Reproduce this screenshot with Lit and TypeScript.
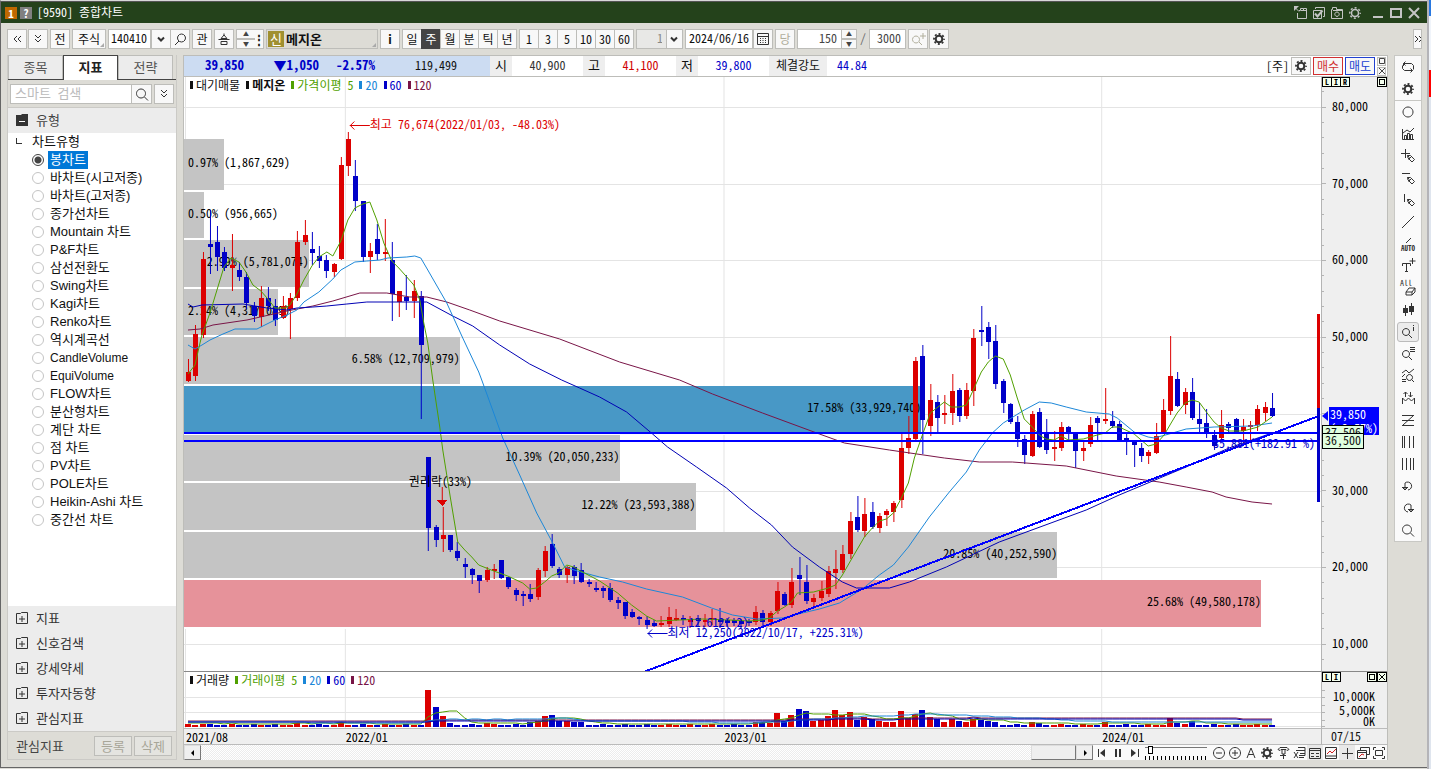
import { LitElement, html, svg, css } from "lit";
import { customElement, property, state } from "lit/decorators.js";
import { classMap } from "lit/directives/class-map.js";

const S = (d: string) => svg`<path d=${d} fill="none" stroke="currentColor"></path>`;
const F = (d: string) => svg`<path d=${d} fill="currentColor"></path>`;
const PEN = "M7.500 7.500h3l4 4-2.500 2.500-4-4zM8.500 11.500l2.500-2.500M7.500 7.500l2 2";
const MAG = "M6 4.500a3.500 3.500 0 1 0 .01 0zM8.500 10.500l3.500 3.500";

const ICONS: Record<string, any> = {
  left2: S("M8 5L5 8l3 3M12 5L9 8l3 3"),
  right2: S("M1 5l3 3-3 3M5 5l3 3-3 3"),
  down2: S("M5 4l3 3 3-3M5 8l3 3 3-3"),
  chevron: svg`<path d="M5 6.500l3 3 3-3" fill="none" stroke="currentColor" stroke-width="2"></path>`,
  lens: S("M9.500 3a4 4 0 1 1-.01 0zM7 10l-4 4"),
  search: S("M7 3a4.500 4.500 0 1 0 .01 0zM10.500 11l3.500 3.500"),
  lensPlus: S("M6 5a3.500 3.500 0 1 0 .01 0zM9 11l3 3M13 2v6M10 5h6"),
  calendar: svg`${S("M2.500 2.500h11v11h-11zM2.500 5.500h11")}${F("M5 7h1v1H5zM7.500 7h1v1h-1zM10 7h1v1h-1zM5 9h1v1H5zM7.500 9h1v1h-1zM10 9h1v1h-1zM5 11h1v1H5zM7.500 11h1v1h-1zM10 11h1v1h-1z")}`,
  gear: svg`<circle cx="8" cy="8" r="3.300" fill="none" stroke="currentColor" stroke-width="2"></circle><circle cx="8" cy="8" r="5" fill="none" stroke="currentColor" stroke-width="1.800" stroke-dasharray="1.960 1.960" stroke-dashoffset="1"></circle>`,
  sun: svg`<circle cx="8" cy="8" r="3.500" fill="none" stroke="currentColor" stroke-width="1.500"></circle><circle cx="8" cy="8" r="5.200" fill="none" stroke="currentColor" stroke-width="1.500" stroke-dasharray="2 2.080" stroke-dashoffset="1"></circle>`,
  export: svg`${S("M4.500 8v5.500h9v-10h-3M8 5.500h5.500M6 5.500h1.500v-2h3v2M2 2.500l4 4")}${F("M1 1h5L1 6z")}`,
  copy: svg`${S("M4.500 4V2.500h9v9H12M2.500 5.500h8v8h-8z")}<path d="M4 8.500l2.500 3 5-6" fill="none" stroke="currentColor" stroke-width="2"></path>`,
  camera: S("M2.500 4.500h1v-2h4v2h6v9h-11zM4 5.500h9M8 7a2.200 2.200 0 1 0 .01 0z"),
  stairs: S("M8 2.500v2M8 4l-3 3.500h6L8 4M2.500 8.500h11M5 10.500h6v3H5z"),
  loop: S("M3.500 7V4.500h8l2 2v4M5.500 2.500l-2 2 2 2M2.500 6.500v3l2 2h8M10.500 9.500l2 2-2 2"),
  circle: S("M8 3a5 5 0 1 0 .01 0z"),
  indicator: S("M2.500 3v10.500H14M4.500 13V9.500h2V13M7.500 13V7.500h2V13M10.500 13V8.500h2V13M3 7l4-3 3 2 4-4"),
  crossPen: S("M5.500 1v9M1 5.500h9" + PEN),
  linePen: S("M2 3.500h8" + PEN),
  vlinePen: S("M4.500 2v8" + PEN),
  trend: S("M2 14L14 2"),
  auto: svg`${S("M6 7l5-5")}<text x="8" y="15" font-size="7" font-weight="700" text-anchor="middle" fill="currentColor">AUTO</text>`,
  textPlus: svg`${S("M12.500 0v6M9.500 3h6")}${S("M2.500 8V5.500h8V8M6.500 5.500v8M5 13.500h3")}`,
  eraseAll: svg`<text x="6" y="6" font-size="8" text-anchor="middle" fill="currentColor">All</text>${S("M6 12l3-4h6l-3 4zM6 12v3h6v-3M12 15l3-3V8")}`,
  candles: svg`${S("M5.500 3v11M11.500 1v12")}${F("M3 6h5v5H3zM9 4h5v6H9z")}`,
  magInfo: svg`${S(MAG)}${S("M13.500 1v1M13.500 3v4")}`,
  magLines: svg`${S(MAG)}${S("M10 1.500h5M10 3.500h5M10 5.500h5")}`,
  magTrend: S("M2 5l4-3 3 3 5-4M2 9l3-3M2 11.500h4M2 13.500h4M9.500 6.500a3 3 0 1 0 .01 0zM12 12l2 2"),
  swing: svg`${S("M2.500 14V8l3 3 3-3 3 3 3-3v6M5.500 7V2M10.500 2v5M3.500 4l2-2 2 2M8.500 5l2 2 2-2")}`,
  zig: S("M2 3.500h12M2 8.500h12M2 13.500h12M13 4L3 13"),
  bars3: svg`${S("M2.500 2v12M4.500 2v12M9.500 2v12M13.500 2v12")}`,
  bars4: S("M2.500 2v12M6.500 2v12M10.500 2v12M13.500 2v12"),
  undo: S("M5 5a4 4 0 1 1 3 7M2 9.500h6M2.500 9.500l2.500 2.500 2.500-2.500M5 5v7"),
  redo: S("M11 5a4 4 0 1 0-3 7M8 9.500h6M8.500 9.500l2.500 2.500 2.500-2.500M11 5v7"),
  first: svg`${S("M3.500 4v8")}${F("M10 4v8L5 8z")}`,
  pause: F("M5 4h2v8H5zM9 4h2v8H9z"),
  last: svg`${S("M12.500 4v8")}${F("M5 4v8l5-4z")}`,
  minus: S("M8 2.500a5.500 5.500 0 1 0 .01 0zM5 8h6"),
  plus: S("M8 2.500a5.500 5.500 0 1 0 .01 0zM5 8h6M8 5v6"),
  letter: S("M4 13L8 3l4 10M5.500 9.500h5"),
  filter: S("M3 4.500l2-2h7l2 2-2 1-1-1H6l-1 1zM7 5v4h3V5M5 10.500h6M8.500 9v5"),
  excel: S("M5 5.500h9M7 2.500h7v8H8M9 8.500h5M3 7l4 6M7 7l-4 6M8 12.500h5"),
  panel: S("M2.500 3.500h11v10h-11zM2.500 5.500h11M4 8.500h3M9 8.500h3M4 11.500h3M9 11.500h3"),
  chartbox: svg`${S("M2.500 2.500h11v11h-11zM2.500 11h11")}<path d="M4 9l3-3 2 2 4-4" stroke="#d02020" fill="none"></path>`,
  cross: S("M8.500 3v11M3 8.500h11"),
  windows: svg`${S("M5.500 5V2.500h9v7H12M2.500 5.500h9v8h-9zM2.500 7.500h9")}<path d="M4 12l3-3 2 1" stroke="#d02020" fill="none"></path>`,
  full: S("M2.500 5V2.500H5M11 2.500h2.500V5M13.500 11v2.500H11M5 13.500H2.500V11M4.500 5.500h7v5h-7z"),
  folderPlus: S("M2.500 3.500h4l1-1h6v11h-11zM8 6v6M5 9h6"),
  folderMinus: svg`${F("M2 3h5l1-1h6v12H2z")}<path d="M5 9.500h6" stroke="#fff"></path>`,
};
const icon = (n: string) => html`<svg class="ic" width="16" height="16" viewBox="0 0 16 16" aria-hidden="true">${ICONS[n]}</svg>`;
const square = html`<svg width="8" height="8" viewBox="0 0 8 8" aria-hidden="true"><path d="M1.500 1.500h5v5h-5z" fill="none" stroke="currentColor"></path></svg>`;
const saltire = html`<svg width="8" height="8" viewBox="0 0 8 8" aria-hidden="true"><path d="M1 1l6 6M7 1L1 7" fill="none" stroke="currentColor"></path></svg>`;

const FIRST_X = 188;
const STEP = 7.282;
const cx = (i: number) => Math.round(FIRST_X + STEP * i);

// high, body top, body bottom, low; u = rise, d = fall
const CANDLES = `359,372,381,381u 325,334,376,380u 252,259,335,337u 210,244,247,273d 226,242,257,270d 247,252,268,270d 234,265,268,290u 262,270,277,280d 272,277,303,308d 302,306,316,321d
286,298,317,326u 287,298,306,310d 299,306,320,325d 296,306,318,318u 293,298,309,338u 231,242,298,300u 220,235,242,244u 232,249,253,264d 246,256,261,267d 255,260,271,277d
263,264,272,276u 157,165,259,259u 132,139,166,175u 160,176,201,210d 201,201,257,261d 243,251,257,272u 224,239,254,259d 219,252,254,260u 242,260,294,320d 291,291,302,316u
275,297,301,309d 280,291,301,317u 291,296,345,418d 457,457,528,550d 525,527,540,546d 507,535,539,551u 535,535,550,551d 542,551,558,560d 558,564,567,577d 568,569,575,583d
575,575,581,592d 567,570,580,581u 564,569,571,578u 560,560,578,578d 577,577,587,588d 588,590,595,600d 591,594,595,605d 584,594,599,601d 568,570,597,599u 546,551,571,576u
534,544,566,567d 567,569,575,577d 566,567,575,582u 565,567,576,583d 563,570,582,582d 579,582,584,586d 582,588,589,591d 586,588,591,597d 583,588,600,601d 597,600,603,608d
602,602,616,618d 609,612,617,617d 616,617,619,624d 616,620,625,628d 620,623,626,626d 616,623,625,626u 607,617,624,626u 609,618,619,620u 615,618,620,624d 616,619,622,627u
615,618,621,626d 614,620,621,626u 609,618,620,624u 608,619,622,627d 618,620,623,626d 618,620,623,625d 619,621,624,627d 619,621,623,625d 606,612,622,624u 610,613,622,627d
611,613,622,625u 582,591,611,613u 592,594,605,605d 568,582,605,607u 557,575,579,594d 565,582,601,603d 594,598,602,607u 581,591,598,600u 566,571,594,596u 550,569,573,588u
545,554,570,572u 512,521,554,558u 496,517,530,531d 498,514,531,536u 502,512,527,528d 513,516,528,532u 509,511,515,525u 501,503,512,521u 434,448,500,507u 416,438,448,453u
357,361,439,440u 345,356,420,453d 384,400,426,435u 395,402,418,433d 395,413,415,423u 374,391,413,424u 388,390,416,421d 383,390,416,418u 329,338,391,405u 306,330,332,345d
322,327,342,358d 325,341,384,388d 379,381,403,412d 403,404,422,423d 416,422,439,446d 435,439,455,463d 411,414,456,456u 408,412,447,447d 419,433,450,453d 431,447,449,460u
422,427,448,450u 426,427,434,441d 434,434,451,467d 440,448,451,460u 417,425,444,446u 416,418,423,439d 388,419,421,423u 411,421,426,427d 421,424,441,441d 433,438,441,454d
441,442,445,466d 443,448,456,461d 450,452,456,463u 423,436,453,453u 399,410,433,433u 336,376,411,414u 372,379,406,406d 388,392,405,413u 378,392,418,419d 403,419,424,433d
409,423,433,437d 430,435,446,449d 410,425,438,440u 422,424,428,432d 418,419,432,432d 419,427,431,442u 421,425,427,440u 405,409,425,430u 402,407,413,420u 393,408,416,416d`
  .split(/\s+/)
  .map((t) => ({ v: t.slice(0, -1).split(",").map(Number), up: t.endsWith("u") }));

const VOL: Record<number, number> = {
  2: 3, 15: 4, 21: 5, 33: 37, 34: 20, 35: 11, 36: 4, 41: 4, 47: 5, 48: 6, 49: 11, 50: 12, 51: 6, 52: 6, 53: 5, 54: 5,
  78: 5, 79: 5, 80: 4, 81: 14, 82: 6, 83: 12, 84: 18, 85: 16, 86: 6, 87: 7, 88: 11, 89: 17, 90: 12, 91: 15, 92: 7, 93: 10,
  94: 8, 95: 6, 96: 5, 97: 5, 98: 16, 99: 9, 100: 13, 101: 17, 102: 10, 103: 8, 104: 5, 105: 8, 106: 6, 107: 5, 108: 8,
  109: 7, 110: 6, 111: 5, 116: 5, 117: 4, 126: 5, 135: 9, 136: 4, 137: 3, 138: 6,
};

const MA5 = "188,374 195,365 200,343 202,335 210,313 217,290 224,267 231,258 239,262 246,272 253,285 261,291 268,299 275,308 285,308 290,305 297,294 304,280 312,266 319,257 327,252 333,256 341,241 348,220 355,208 363,204 370,202 377,220 384,243 392,261 399,268 407,277 414,285 420,300 424,323 428,343 433,380 440,427 443,450 451,500 458,542 465,550 472,557 479,565 494,571 508,576 523,583 530,589 537,588 545,582 552,576 559,573 567,565 574,567 581,571 600,581 618,593 632,605 647,616 657,621 680,620 703,619 730,620 750,621 763,620 770,618 778,611 785,607 792,602 798,593 814,592 829,588 836,585 843,575 851,561 858,549 865,537 872,529 880,521 887,519 894,513 902,498 909,483 915,458 923,435 931,413 945,402 952,407 960,407 967,405 974,390 982,372 989,362 996,356 1004,359 1011,375 1018,398 1025,419 1033,427 1040,435 1047,439 1055,440 1062,436 1069,440 1084,439 1098,435 1106,433 1113,427 1120,427 1135,434 1142,440 1149,446 1157,444 1165,435 1172,423 1178,413 1186,403 1193,400 1200,402 1208,413 1215,422 1222,428 1230,431 1244,431 1259,427 1273,417";
const MA20 = "188,345 195,349 202,345 210,340 223,334 235,329 257,329 275,320 287,315 297,310 304,302 319,292 333,279 341,270 355,262 367,261 380,260 388,258 407,257 415,256 421,258 428,270 447,303 463,338 479,372 482,380 494,413 503,438 520,475 537,513 552,541 565,567 581,572 600,577 623,582 647,589 683,597 712,608 733,615 757,619 783,618 803,613 820,609 840,603 863,589 880,575 894,565 909,547 930,517 950,492 967,472 980,450 993,433 1004,423 1025,410 1040,402 1052,403 1067,407 1087,412 1110,414 1118,418 1135,432 1149,437 1155,438 1170,434 1187,429 1215,427 1253,426 1273,423";
const MA60 = "188,304 193,307 202,305 243,304 267,308 287,310 297,308 313,307 327,306 347,304 367,302 427,302 453,316 473,326 500,345 530,364 562,380 580,388 600,397 627,412 653,434 668,447 697,467 727,488 750,508 772,525 793,547 820,567 843,582 857,588 890,588 910,582 947,567 1000,542 1087,510 1120,495 1187,467 1230,448 1273,433";
const MA120 = "188,330 200,329 213,325 247,320 287,311 313,306 333,301 360,293 387,293 410,297 427,297 447,302 470,310 500,321 560,339 620,362 680,380 713,394 763,413 820,434 845,443 890,450 945,458 980,462 1013,462 1067,466 1117,476 1160,482 1187,487 1213,492 1227,497 1253,502 1273,504";

const PROFILE: [number, number, number, string, string][] = [
  [139, 190, 224, "gray", "0.97% (1,867,629)"],
  [192, 238, 204, "gray", "0.50% (956,665)"],
  [240, 287, 309, "gray", "2.99% (5,781,074)"],
  [289, 335, 278, "gray", "2.24% (4,317,089)"],
  [337, 384, 460, "gray", "6.58% (12,709,979)"],
  [386, 433, 922, "blue", "17.58% (33,929,740)"],
  [435, 481, 620, "gray", "10.39% (20,050,233)"],
  [483, 530, 696, "gray", "12.22% (23,593,388)"],
  [532, 578, 1058, "gray", "20.85% (40,252,590)"],
  [580, 627, 1262, "pink", "25.68% (49,580,178)"],
];

const TYPES = ["봉차트", "바차트(시고저종)", "바차트(고저종)", "종가선차트", "Mountain 차트", "P&F차트", "삼선전환도", "Swing차트", "Kagi차트", "Renko차트", "역시계곡선", "CandleVolume", "EquiVolume", "FLOW차트", "분산형차트", "계단 차트", "점 차트", "PV차트", "POLE차트", "Heikin-Ashi 차트", "중간선 차트"];
const YEARS = [185, 345, 724, 1102];
const PRICES = [107, 184, 260, 337, 414, 491, 567, 644];

const base = css`
  * { box-sizing: border-box; }
  :host { font: 12px/16px "Noto Sans Mono CJK KR", "Noto Sans CJK KR", sans-serif; color: #111; }
  button, input, select { font: inherit; color: inherit; margin: 0; padding: 0; border: 1px solid #bdbdb9; border-radius: 0; background: #f8f8f8; min-width: 0; white-space: nowrap; }
  .ic { display: block; flex: none; color: #333; overflow: visible; }
  button { display: flex; align-items: center; justify-content: center; }
`;

@customElement("top-tools")
class TopTools extends LitElement {
  @state() period = "주";
  static styles = [base, css`
    :host { display: flex; align-items: flex-start; gap: 2px; height: 32px; padding: 6px 5px 0 6px; }
    .b, .t { height: 20px; flex: none; }
    .b { width: 20px; padding-bottom: 1px; }
    .wide { width: 34px; position: relative; }
    .corner::after { content: ""; position: absolute; right: 1px; bottom: 1px; border: 2px solid transparent; border-right-color: #aaa; border-bottom-color: #aaa; }
    .grp { display: flex; flex: none; }
    .grp .b + .b { margin-left: -1px; }
    .pair { display: flex; gap: 1px; flex: none; }
    .t { background: #fff; padding: 0 3px 3px; }
    .code { width: 43px; padding: 0 2px 3px; }
    .count { width: 45px; }
    .total { width: 37px; }
    .b.on { background: #444; color: #fff; border-color: #444; }
    .num { text-align: right; color: #444; padding-right: 4px; }
    .spin { display: grid; width: 20px; height: 20px; flex: none; }
    .spin button { height: 10px; font-size: 6px; line-height: 6px; color: #444; }
    .narrow { width: 16px; margin-left: -3px; }
    .dots { width: 9px; margin-left: -3px; font-weight: 700; border-left: 0; }
    .name { display: flex; align-items: center; gap: 2px; width: 112px; height: 20px; flex: none; border: 1px solid #bdbdb9; padding-left: 1px; font-weight: 700; font-size: 13px; position: relative; }
    .badge { width: 16px; height: 16px; line-height: 15px; background: #a09030; color: #fff; font-weight: 400; text-align: center; font-size: 13px; }
    .i { font-weight: 700; }
    .sel { display: grid; flex: none; width: 47px; height: 20px; align-items: center; }
    .sel > * { grid-area: 1 / 1; }
    select { appearance: none; width: 47px; height: 20px; padding: 0 20px 3px 20px; color: #888; background: linear-gradient(90deg, #e8e8e6 29px, #bdbdb9 29px 30px, #f8f8f8 30px); }
    .sel .ic { justify-self: end; pointer-events: none; margin-right: 1px; }
    .date { width: 68px; }
    .off, .off .ic { color: #b0ae9c; }
    .slash { width: 8px; text-align: center; color: #666; line-height: 18px; }
    .more { margin-left: auto; width: 9px; overflow: hidden; justify-content: flex-start; }
  `];
  render() {
    const per = (l: string) => html`<button class=${classMap({ b: true, on: this.period === l })} @click=${() => (this.period = l)}>${l}</button>`;
    return html`
      <div class="pair"><button class="b" aria-label="이전">${icon("left2")}</button><button class="b" aria-label="펼치기">${icon("down2")}</button></div>
      <button class="b">전</button>
      <button class="b wide corner">주식</button>
      <div class="grp"><input class="t code" aria-label="종목코드" value="140410" /><button class="b" aria-label="최근 종목">${icon("chevron")}</button><button class="b" aria-label="종목 검색">${icon("lens")}</button></div>
      <button class="b">관</button>
      <button class="b" aria-label="정렬">${icon("stairs")}</button>
      <div class="spin"><button aria-label="위">▲</button><button aria-label="아래">▼</button></div>
      <button class="b dots" aria-label="메뉴">⋮</button>
      <div class="name corner"><span class="badge">신</span>메지온</div>
      <button class="b i">i</button>
      <div class="grp">${["일", "주", "월", "분", "틱", "년"].map(per)}</div>
      <div class="grp">${["1", "3", "5", "10", "30", "60"].map(per)}</div>
      <label class="sel"><select aria-label="분 간격"><option>1</option></select>${icon("chevron")}</label>
      <div class="grp"><input class="t date" aria-label="조회일" value="2024/06/16" /><button class="b" aria-label="달력">${icon("calendar")}</button></div>
      <button class="b off">당</button>
      <input class="t num count" aria-label="표시 봉수" value="150" />
      <div class="spin narrow"><button aria-label="증가">▲</button><button aria-label="감소">▼</button></div>
      <span class="slash">/</span>
      <input class="t num total" aria-label="전체 봉수" value="3000" />
      <div class="pair"><button class="b off" aria-label="확대">${icon("lensPlus")}</button><button class="b" aria-label="설정">${icon("gear")}</button></div>
      <button class="b more" aria-label="더보기">${icon("right2")}</button>`;
  }
}

@customElement("side-panel")
class SidePanel extends LitElement {
  @state() picked = "봉차트";
  static styles = [base, css`
    :host { display: flex; flex-direction: column; width: 170px; flex: none; min-height: 0; border: 1px solid #cbcac6; border-top: 0; background: #dddcd6; }
    .tabs { display: flex; border-bottom: 1px solid #444; height: 25px; flex: none; }
    .tabs button { width: 55px; font-size: 13px; border-bottom: 0; background: #ececec; color: #555; padding-bottom: 2px; }
    .tabs .on { background: #fff; color: #222; font-weight: 700; border-color: #444; height: 25px; }
    .find { display: flex; padding: 4px 2px 3px; flex: none; }
    .find input { width: 122px; height: 20px; background: #fff; padding: 0 4px 3px; font-size: 13px; }
    .find input::placeholder { color: #bbb; }
    .find button { width: 20px; height: 20px; border-left: 0; }
    .find button + button { border-left: 1px solid #bdbdb9; margin-left: 2px; }
    .head, .row { display: flex; align-items: center; gap: 6px; height: 25px; padding: 0 7px 1px 6px; font-size: 13px; background: #ececec; color: #333; border: 0; justify-content: flex-start; flex: none; width: 100%; }
    .head { border-top: 1px solid #cbcac6; height: 26px; color: #444; }
    .list { flex: 1; min-height: 0; overflow: hidden; background: #fff; font: 13px/18px "Liberation Sans", "Noto Sans CJK KR", sans-serif; }
    .root { padding-left: 24px; position: relative; height: 18px; }
    .root::before { content: ""; position: absolute; left: 8px; top: 5px; width: 5px; height: 5px; border-left: 1px solid #333; border-bottom: 1px solid #333; }
    label { display: flex; align-items: center; gap: 5px; height: 18px; padding-left: 24px; }
    .lat { font-size: 12px; }
    label span { line-height: 18px; padding: 0 2px; margin-left: -1px; }
    .on span { background: #0078d7; color: #fff; }
    input[type="radio"] { appearance: none; width: 12px; height: 12px; border: 1px solid #c4c4c4; border-radius: 50%; background: #fff; flex: none; }
    input[type="radio"]:checked { border-color: #444; background: radial-gradient(#444 0 3px, #fff 4px); }
    .foot { display: flex; align-items: center; height: 28px; flex: none; padding: 0 4px 0 8px; gap: 2px; border-top: 1px solid #cbcac6; font-size: 13px; color: #444; }
    .foot span { flex: 1; }
    .foot button { width: 38px; height: 20px; color: #a8a698; background: #e4e4e0; }
  `];
  render() {
    return html`
      <div class="tabs"><button>종목</button><button class="on">지표</button><button>전략</button></div>
      <div class="find"><input placeholder="스마트 검색" aria-label="스마트 검색" /><button aria-label="검색">${icon("search")}</button><button aria-label="펼치기">${icon("down2")}</button></div>
      <button class="head">${icon("folderMinus")}유형</button>
      <div class="list"><div class="root">차트유형</div>
        ${TYPES.map((t) => html`<label class=${classMap({ on: t === this.picked, lat: /Volume/.test(t) })}><input type="radio" name="type" .checked=${t === this.picked} @change=${() => (this.picked = t)} /><span>${t}</span></label>`)}
      </div>
      ${["지표", "신호검색", "강세약세", "투자자동향", "관심지표"].map((t) => html`<button class="row">${icon("folderPlus")}${t}</button>`)}
      <div class="foot"><span>관심지표</span><button>등록</button><button>삭제</button></div>`;
  }
}

@customElement("quote-bar")
class QuoteBar extends LitElement {
  static styles = [base, css`
    :host { display: flex; height: 22px; line-height: 18px; flex: none; background: #fff; border: 1px solid #bdbdb9; border-width: 1px 0; white-space: nowrap; }
    .now { display: flex; width: 306px; background: #ccdcf2; }
    .now span { text-align: right; }
    .now b { color: #0000c8; text-align: right; font-size: 13px; }
    .w60 { width: 60px; } .w75 { width: 75px; } .w56 { width: 56px; } .w82 { width: 82px; }
    .k { background: #eee; width: 22px; text-align: center; font-size: 13px; }
    .k.l { width: 58px; font-size: 12px; }
    .v { width: 71px; text-align: center; color: #333; }
    .v.r { color: #d00000; } .v.b { color: #0000c8; }
    .v.s { width: 50px; }
    .right { display: flex; margin-left: auto; align-items: center; gap: 2px; padding-right: 1px; }
    button { width: 20px; height: 18px; }
    .buy, .sell { width: 30px; padding-bottom: 1px; }
    .buy { color: #d03030; border-color: #d03030; }
    .sell { color: #2040d0; border-color: #2040d0; }
    .mini { display: grid; gap: 1px; }
    .mini button { width: 9px; height: 9px; color: #444; overflow: hidden; }
    .mini svg { flex: none; }
  `];
  render() {
    return html`
      <div class="now"><b class="w60">39,850</b><b class="w75">▼1,050</b><b class="w56">-2.57%</b><span class="w82">119,499</span></div>
      <span class="k">시</span><span class="v">40,900</span><span class="k">고</span><span class="v r">41,100</span><span class="k">저</span><span class="v b">39,800</span><span class="k l">체결강도</span><span class="v b s">44.84</span>
      <div class="right"><span>[주]</span><button aria-label="설정">${icon("gear")}</button><button class="buy">매수</button><button class="sell">매도</button>
        <div class="mini"><button aria-label="확대">${square}</button><button aria-label="닫기">${saltire}</button></div></div>`;
  }
}

const px = (x: number) => `${((x - 184) / 1138) * 100}%`;
const py = (y: number) => `${((y - 79) / 594) * 100}%`;
const vy = (y: number) => `${((y - 674) / 56) * 100}%`;
const layer = (box: string, body: any) => svg`<svg width="100%" height="100%" viewBox=${box} preserveAspectRatio="none">${body}</svg>`;
const hline = (x1: number, x2: number, y: number, c: string) => svg`<path class=${c} d="M${x1} ${y + 0.5}H${x2}"></path>`;

@customElement("chart-board")
class ChartBoard extends LitElement {
  static styles = [base, css`
    :host { display: grid; grid-template-columns: minmax(0, 1fr) 66px; grid-template-rows: minmax(0, 1fr) 57px 17px 15px; flex: 1; min-height: 0; background: #fff; }
    .pane { position: relative; min-height: 0; min-width: 0; overflow: hidden; }
    .pane > svg { display: block; width: 100%; height: 100%; position: absolute; inset: 0; }
    .axis { background: #efefef; border-left: 1px solid #b4b4b4; }
    .vol { border-top: 1px solid #888; }
    path, line, rect, polyline { shape-rendering: crispEdges; }
    .bottom path { shape-rendering: auto; }
    polyline { fill: none; }
    text { dominant-baseline: central; font-size: 12px; fill: #000; }
    .grid { stroke: #e4e4e4; } .tick { stroke: #b4b4b4; }
    .gray { fill: #c4c4c4; } .blue { fill: #4898c6; } .pink { fill: #e6929a; } .gap { fill: #fff; }
    .u { fill: #dc0000; } .d { fill: #0000c8; }
    .ul { stroke: #dc0000; } .dl { stroke: #0000c8; }
    .m5 { stroke: #50a000; } .m20 { stroke: #1b87d8; } .m60 { stroke: #0000b4; } .m120 { stroke: #781446; }
    .guide { stroke: #0000ff; stroke-width: 2; }
    .high { fill: #dc0000; } .low { fill: #0000c8; }
    .end { text-anchor: end; }
    .legend { position: absolute; left: 6px; top: 0; display: flex; gap: 6px; white-space: pre; }
    .legend span { display: flex; align-items: center; gap: 3px; }
    .legend span::before { content: ""; width: 3px; height: 8px; background: currentColor; }
    .legend .name { font-weight: 700; }
    .c5 { color: #50a000; } .c20 { color: #1b87d8; } .c60 { color: #0000c8; } .c120 { color: #781446; }
    .boxes { position: absolute; left: 0; right: 0; top: 0; display: flex; justify-content: space-between; }
    .boxes div { display: flex; }
    .boxes button { width: 10px; height: 10px; border-color: #000; background: #f4ffee; font-size: 8px; line-height: 8px; font-weight: 700; margin-right: -1px; color: #000; }
    .boxes div + div button { margin: 0; }
    .tag { position: absolute; font-size: 12px; line-height: 14px; }
    .now { left: 7px; top: calc(330% / 5.94); width: 50px; height: 28px; background: #0000ff; color: #fff; padding-left: 1px; }
    .now::before { content: ""; position: absolute; left: -7px; top: 4px; border: 5px solid transparent; border-right: 6px solid #0000ff; border-left: 0; }
    .lv { left: 0; width: 42px; height: 16px; background: #e0ffe0; border: 1px solid #000; padding-left: 2px; line-height: 12px; }
    .lv1 { top: calc(348% / 5.94); } .lv2 { top: calc(356% / 5.94); }
    .dates { background: #efefef; border-top: 1px solid #bbb; border-bottom: 1px solid #bbb; }
    .last { padding-left: 9px; line-height: 14px; }
    .bottom { grid-column: 1 / -1; display: flex; background: #fafafa; align-items: stretch; }
    .arrow { width: 17px; background: #efefef; border: 1px solid #777; border-top-color: #ddd; border-left-color: #ddd; flex: none; }
    .track { flex: 1; display: flex; justify-content: flex-end; background: repeating-conic-gradient(#ececec 0 25%, #fff 0 50%) 0 0 / 2px 2px; }
    .thumb { width: 45px; background: #efefef; border: 1px solid #777; border-top-color: #ddd; border-left-color: #ddd; }
    .play { display: flex; width: 46px; margin: 0 4px 0 2px; justify-content: space-between; }
    .tool { width: 16px; height: 15px; border: 0; background: none; flex: none; overflow: hidden; color: #333; }
    .play .tool { width: 15px; }
    .tool.on { background: #e8e8e8; }
    .zoom { appearance: none; width: 62px; height: 15px; border: 0; background: linear-gradient(#777 0 0) 0 2px / 100% 1px no-repeat, repeating-linear-gradient(90deg, #000 0 1px, transparent 1px 4px) 0 100% / 100% 4px no-repeat; margin-right: 4px; }
    .zoom::-webkit-slider-thumb { appearance: none; width: 5px; height: 8px; border: 1px solid #000; background: #fff; margin-top: -5px; }
    .tools { display: flex; width: 176px; }
  `];
  legend(first: any, name: string) {
    return html`<div class="legend">${first}<span class="c5">${name} 5</span><span class="c20">20</span><span class="c60">60</span><span class="c120">120</span></div>`;
  }
  render() {
    const box = "184 77 1138 594";
    const vbox = "184 672 1138 56";
    const vAt = (i: number) => VOL[i] ?? 2 + (i % 3 === 0 ? 1 : 0);
    const vMa = (n: number, lift: number) =>
      CANDLES.map((_, i) => {
        let s = 0;
        for (let k = 0; k < n; k++) s += vAt(Math.max(0, i - k));
        return `${cx(i)},${Math.round(726 - lift - s / n)}`;
      }).join(" ");
    const arrow = (d: string) => html`<svg width="8" height="8" viewBox="0 0 8 8" aria-hidden="true"><path d=${d}></path></svg>`;
    return html`
      <div class="pane">
        <svg>
          ${layer(box, svg`
            ${YEARS.map((x) => svg`<path class="grid" d="M${x + 0.5} 77V671"></path>`)}
            ${PRICES.map((y) => hline(184, 1322, y, "grid"))}
            ${PROFILE.map(([a, b, r, c]) => svg`<rect class="gap" x="184" y=${b} width=${r - 184} height="2"></rect><rect class=${c} x="184" y=${a} width=${r - 184} height=${b - a}></rect>`)}`)}
          ${PROFILE.map(([a, b, r, , t]) =>
            r < 300 ? svg`<text x=${px(188)} y=${py((a + b) / 2 - 1)}>${t}</text>` : svg`<text class="end" x=${px(r)} y=${py((a + b) / 2 - 1)}>${t}</text>`)}
          ${layer(box, svg`
            ${CANDLES.map(({ v: [h, t, b, l], up }, i) => svg`<path class=${up ? "ul" : "dl"} d="M${cx(i) + 0.5} ${h}V${l + 1}"></path><rect class=${up ? "u" : "d"} x=${cx(i) - 2} y=${t} width="5" height=${Math.max(2, b - t)}></rect>`)}
            <polyline class="m120" points=${MA120}></polyline><polyline class="m60" points=${MA60}></polyline>
            <polyline class="m20" points=${MA20}></polyline><polyline class="m5" points=${MA5}></polyline>
            <path class="guide" d="M184 433H1321M184 441H1321M644 672L1321 415.500"></path>
            <path class="ul" d="M442.500 487V501"></path><path class="high" d="M437 500h11l-5.500 6z"></path>
            <path class="ul" d="M350 125.500h20M354.500 121.500l-4 4 4 4" fill="none"></path>
            <path class="dl" d="M648 633.500h20M652.500 629.500l-4 4 4 4" fill="none"></path>
            <rect class="u" x="1318" y="314" width="3" height="94"></rect><rect class="d" x="1318" y="408" width="3" height="94"></rect>`)}
          <text class="high" x=${px(370)} y=${py(125)}>최고 76,674(2022/01/03, -48.03%)</text>
          <text class="low" x=${px(668)} y=${py(633)}>최저 12,250(2022/10/17, +225.31%)</text>
          <text x=${px(409)} y=${py(482)}>권리락(33%)</text>
          <text class="low" x=${px(689)} y=${py(623)}>12,612( 2)</text>
          <text class="low" x=${px(1214)} y=${py(444)}>35,881(+182.91 %)</text>
        </svg>
        ${this.legend(html`<span>대기매물</span><span class="name">메지온</span>`, "가격이평")}
      </div>
      <div class="pane axis">
        <svg>${layer("1322 77 65 594", Array.from({ length: 39 }, (_, i) => hline(1322, i % 5 === 2 ? 1326 : 1324, Math.round(76 + i * 15.34), "tick")))}
          ${PRICES.map((y, i) => svg`<text x="10" y=${py(y)}>${80 - i * 10},000</text>`)}</svg>
        <div class="boxes"><div><button>L</button><button>I</button><button>R</button></div><div><button aria-label="확대">${square}</button></div></div>
        <div class="tag now">39,850<br />(-2.57%)</div><div class="tag lv lv1">37,506</div><div class="tag lv lv2">36,500</div>
      </div>
      <div class="pane vol">
        <svg>${layer(vbox, svg`
          ${YEARS.map((x) => svg`<path class="grid" d="M${x + 0.5} 672V728"></path>`)}
          ${[697, 712, 726].map((y) => hline(184, 1322, y, "grid"))}
          ${CANDLES.map(({ up }, i) => svg`<rect class=${up || i === 33 ? "u" : "d"} x=${cx(i) - 3} y=${727 - vAt(i)} width="6" height=${vAt(i)}></rect>`)}
          <polyline class="m120" points=${vMa(60, 2)}></polyline><polyline class="m5" points=${vMa(5, 0)}></polyline>
          <polyline class="m20" points=${vMa(20, 1)}></polyline><polyline class="m60" points=${vMa(60, 1)}></polyline>`)}</svg>
        ${this.legend(html`<span>거래량</span>`, "거래이평")}
      </div>
      <div class="pane axis vol">
        <svg>${layer("1322 672 65 56", [690, 697, 705, 712, 720, 726].map((y) => hline(1322, 1325, y, "tick")))}
          <text class="end" x="53" y=${vy(697)}>10,000K</text><text class="end" x="53" y=${vy(712)}>5,000K</text><text class="end" x="53" y=${vy(722)}>0K</text></svg>
        <div class="boxes"><div><button>L</button><button>I</button></div><div><button aria-label="확대">${square}</button><button aria-label="닫기">${saltire}</button></div></div>
      </div>
      <div class="pane dates"><svg>${["2021/08", "2022/01", "2023/01", "2024/01"].map((t, i) => svg`<text x=${px(YEARS[i] + 1)} y="7">${t}</text>`)}</svg></div>
      <div class="pane axis dates last">07/15</div>
      <div class="bottom">
        <button class="arrow" aria-label="왼쪽">${arrow("M5 1v6L2 4z")}</button><div class="track"><div class="thumb"></div></div><button class="arrow" aria-label="오른쪽">${arrow("M3 1v6l3-3z")}</button>
        <div class="play">${["first", "pause", "last"].map((n) => html`<button class="tool" aria-label=${n}>${icon(n)}</button>`)}</div>
        <input class="zoom" type="range" aria-label="배율" value="5" />
        <div class="tools">${["minus", "plus", "letter", "gear", "filter", "excel", "panel", "chartbox", "cross", "windows", "full"].map((n) => html`<button class=${classMap({ tool: true, on: n === "panel" || n === "cross" })} aria-label=${n}>${icon(n)}</button>`)}</div>
      </div>`;
  }
}

@customElement("draw-tools")
class DrawTools extends LitElement {
  @property() active = "magInfo";
  static styles = [base, css`
    :host { display: flex; flex-direction: column; align-items: center; align-self: flex-start; width: 28px; flex: none; border: 1px solid #c8c8c4; background: #fafafa; }
    button { width: 22px; height: 22px; border: 0; background: none; }
    .line { width: 26px; height: 1px; background: #c8c8c4; }
    .on { height: 20px; margin: 1px 0; border: 1px solid #bbb; border-radius: 3px; background: #ececec; }
  `];
  render() {
    const names = ["loop", "gear", "-", "circle", "indicator", "crossPen", "linePen", "vlinePen", "trend", "auto", "textPlus", "eraseAll", "candles", "magInfo", "magLines", "magTrend", "swing", "zig", "bars3", "bars4", "undo", "redo", "search"];
    return names.map((n) => (n === "-" ? html`<div class="line"></div>` : html`<button aria-label=${n} class=${classMap({ on: n === this.active })}>${icon(n)}</button>`));
  }
}

@customElement("app-root")
class AppRoot extends LitElement {
  static styles = [base, css`
    :host { display: flex; height: 100vh; background: #dddcd6; overflow: hidden; }
    .window { flex: 1; min-width: 0; display: flex; flex-direction: column; border: 1px solid #666; border-top: 1px solid #d8d8d8; border-right: 0; margin-bottom: 1px; }
    .title { display: flex; align-items: center; gap: 3px; height: 22px; border-top: 1px solid #555; background: #24421b; color: #fff; padding: 0 6px 0 4px; flex: none; font-size: 12px; }
    .title b { width: 12px; height: 12px; background: #c06800; line-height: 12px; text-align: center; font-size: 11px; }
    .title b + b { background: #808080; }
    .title h1 { font-size: 12px; line-height: 14px; padding-bottom: 2px; font-weight: 400; margin: 0 auto 0 2px; }
    .title button { width: 15px; height: 16px; border: 0; background: none; }
    .title .ic { color: #c4c4c4; }
    .title .sys { width: 15px; color: #c4c4c4; }
    .title .sys:nth-last-child(3) { margin-left: 5px; }
    .main { display: flex; flex: 1; min-height: 0; gap: 6px; padding: 0 5px 7px 6px; }
    .center { display: flex; flex-direction: column; flex: 1; min-width: 0; border-left: 1px solid #bdbdb9; border-right: 1px solid #bdbdb9; }
    .edge { width: 4px; flex: none; border-left: 2px solid #b4b4b8; background: linear-gradient(#2878e0 0 16px, #f0f4fa 16px 70px, #ff0000 70px 97px, #dfe5ee 97px); }
  `];
  render() {
    const sys = (d: string, l: string) => html`<button class="sys" aria-label=${l}><svg width="14" height="14" viewBox="0 0 14 14"><path d=${d} fill="none" stroke="currentColor" stroke-width="2"></path></svg></button>`;
    return html`
      <div class="window">
        <header class="title"><b>1</b><b>?</b><h1>[9590] 종합차트</h1>
          ${["export", "copy", "camera", "sun"].map((n) => html`<button aria-label=${n}>${icon(n)}</button>`)}
          ${sys("M2 11H12", "최소화")}${sys("M2 3H12V11H2z", "최대화")}${sys("M2 2L12 12M12 2L2 12", "닫기")}
        </header>
        <top-tools></top-tools>
        <div class="main"><side-panel></side-panel><div class="center"><quote-bar></quote-bar><chart-board></chart-board></div><draw-tools></draw-tools></div>
      </div>
      <div class="edge"></div>`;
  }
}
